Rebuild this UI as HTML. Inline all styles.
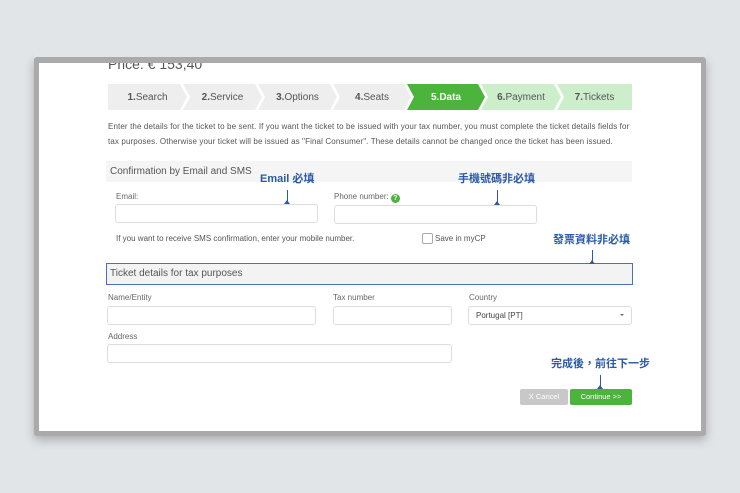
<!DOCTYPE html>
<html><head><meta charset="utf-8"><style>
body{margin:0;width:740px;height:493px;background:#e2e5e8;font-family:"Liberation Sans","Noto Sans CJK TC",sans-serif;position:relative;overflow:hidden}
.frame{position:absolute;left:34px;top:57px;width:672px;height:379px;background:#aaa;border-radius:3px;box-shadow:0 4px 10px rgba(0,0,0,.25)}
.page{position:absolute;left:39px;top:63px;width:662px;height:368px;background:#fff;overflow:hidden}
.a{position:absolute}
.step{position:absolute;top:84px;height:26px;font-size:10px;color:#555;display:flex;align-items:center;justify-content:center}
.txt{font-size:8px;color:#555}
.inp{position:absolute;border:1px solid #ddd;border-radius:3px;background:#fff;height:17px}
.lab{position:absolute;font-size:8px;color:#666}
.ann{position:absolute;color:#2c5aa8;font-weight:bold;font-size:11px;font-family:"Liberation Sans","Noto Sans CJK TC",sans-serif}
.ln{position:absolute;width:1px;background:#2c5aa8}
.ah{position:absolute;width:0;height:0;border-left:3px solid transparent;border-right:3px solid transparent;border-bottom:4px solid #2c5aa8}
</style></head><body>
<div class="frame"></div>
<div class="page"></div>
<div class="a" style="left:108px;top:56px;font-size:14px;color:#555">Price: € 153,40</div>
<div class="a" style="left:34px;top:52px;width:672px;height:11px;background:#e2e5e8"></div>
<div class="a" style="left:34px;top:57px;width:672px;height:6px;background:#aaa;border-radius:3px 3px 0 0"></div>
<div class="step" style="left:108px;width:79px;background:#eee;clip-path:polygon(0 0,72px 0,79px 50%,72px 100%,0 100%)"><b>1.</b>Search</div>
<div class="step" style="left:183px;width:79px;background:#eee;clip-path:polygon(0 0,72px 0,79px 50%,72px 100%,0 100%,7px 50%)"><b>2.</b>Service</div>
<div class="step" style="left:258px;width:79px;background:#eee;clip-path:polygon(0 0,72px 0,79px 50%,72px 100%,0 100%,7px 50%)"><b>3.</b>Options</div>
<div class="step" style="left:333px;width:78px;background:#eee;clip-path:polygon(0 0,71px 0,78px 50%,71px 100%,0 100%,7px 50%)"><b>4.</b>Seats</div>
<div class="step" style="left:407px;width:78px;background:#4cb33c;color:#fff;clip-path:polygon(0 0,71px 0,78px 50%,71px 100%,0 100%,7px 50%)"><b>5.Data</b></div>
<div class="step" style="left:481px;width:80px;background:#cdeecb;clip-path:polygon(0 0,73px 0,80px 50%,73px 100%,0 100%,7px 50%)"><b>6.</b>Payment</div>
<div class="step" style="left:557px;width:75px;background:#cdeecb;clip-path:polygon(0 0,75px 0,75px 100%,0 100%,7px 50%)"><b>7.</b>Tickets</div>
<div class="a txt" style="left:108px;top:120px;width:528px;line-height:14.5px;letter-spacing:0.12px">Enter the details for the ticket to be sent. If you want the ticket to be issued with your tax number, you must complete the ticket details fields for tax purposes. Otherwise your ticket will be issued as "Final Consumer". These details cannot be changed once the ticket has been issued.</div>
<div class="a" style="left:106px;top:161px;width:526px;height:21px;background:#f5f5f5"></div>
<div class="a" style="left:110px;top:166px;font-size:10px;color:#555">Confirmation by Email and SMS</div>
<div class="lab" style="left:116px;top:192px">Email:</div>
<div class="inp" style="left:115px;top:204px;width:201px"></div>
<div class="lab" style="left:334px;top:192px">Phone number: <span style="display:inline-block;width:9px;height:9px;border-radius:50%;background:#4cb33c;color:#fff;font-size:7px;text-align:center;line-height:9px;font-weight:bold;vertical-align:-1px">?</span></div>
<div class="inp" style="left:334px;top:205px;width:201px"></div>
<div class="a txt" style="left:116px;top:234px">If you want to receive SMS confirmation, enter your mobile number.</div>
<div class="a" style="left:422px;top:233px;width:9px;height:9px;border:1px solid #aaa;border-radius:2px"></div>
<div class="a txt" style="left:435px;top:234px">Save in myCP</div>
<div class="a" style="left:106px;top:263px;width:525px;height:20px;background:#f3f3f3;border:1px solid #4b6fb8"></div>
<div class="a" style="left:110px;top:268px;font-size:10px;color:#555">Ticket details for tax purposes</div>
<div class="lab" style="left:108px;top:293px">Name/Entity</div>
<div class="inp" style="left:107px;top:306px;width:207px;height:17px"></div>
<div class="lab" style="left:333px;top:293px">Tax number</div>
<div class="inp" style="left:333px;top:306px;width:117px;height:17px"></div>
<div class="lab" style="left:469px;top:293px">Country</div>
<div class="inp" style="left:468px;top:306px;width:162px;height:17px"></div>
<div class="a txt" style="left:476px;top:311px;color:#444">Portugal [PT]</div>
<div class="a" style="left:620px;top:314px;border-left:2px solid transparent;border-right:2px solid transparent;border-top:2px solid #666"></div>
<div class="lab" style="left:108px;top:332px">Address</div>
<div class="inp" style="left:107px;top:344px;width:343px;height:17px"></div>
<div class="a" style="left:520px;top:389px;width:48px;height:16px;background:#c8c8c8;color:#fff;font-size:7.5px;text-align:center;line-height:16px;border-radius:2px">X Cancel</div>
<div class="a" style="left:570px;top:389px;width:62px;height:16px;background:#4cb33c;color:#fff;font-size:7.5px;text-align:center;line-height:16px;border-radius:2px">Continue &gt;&gt;</div>
<div class="ann" style="left:260px;top:170px">Email 必填</div>
<div class="ln" style="left:287px;top:190px;height:12px"></div><div class="ah" style="left:284px;top:200px"></div>
<div class="ann" style="left:458px;top:170px">手機號碼非必填</div>
<div class="ln" style="left:497px;top:190px;height:13px"></div><div class="ah" style="left:494px;top:201px"></div>
<div class="ann" style="left:553px;top:231px">發票資料非必填</div>
<div class="ln" style="left:592px;top:250px;height:12px"></div><div class="ah" style="left:589px;top:260px"></div>
<div class="ann" style="left:551px;top:355px">完成後，前往下一步</div>
<div class="ln" style="left:600px;top:375px;height:12px"></div><div class="ah" style="left:597px;top:385px"></div>
</body></html>
